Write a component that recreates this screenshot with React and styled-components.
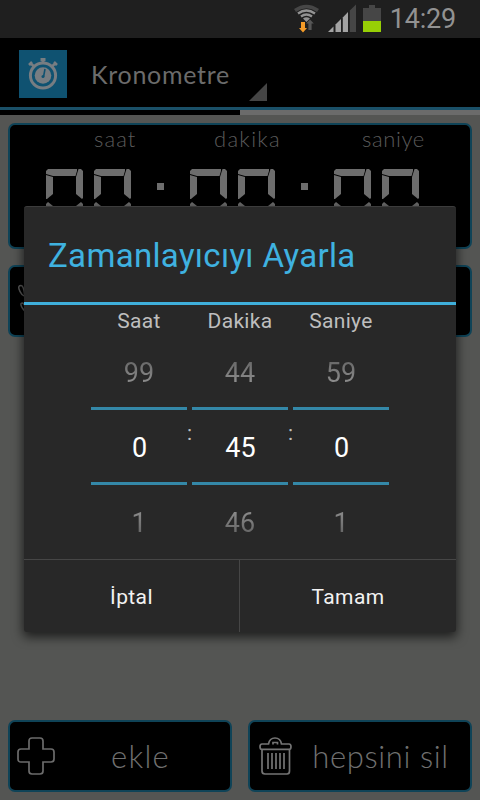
import React from 'react';
import styled, { createGlobalStyle } from 'styled-components';

const GlobalStyle = createGlobalStyle`
  * {
    box-sizing: border-box;
  }
  body {
    margin: 0;
    background-color: #545553;
    font-family: Roboto, 'Liberation Sans', sans-serif;
  }
`;

const Screen = styled.div`
  position: relative;
  display: flex;
  flex-direction: column;
  width: 480px;
  height: 800px;
  overflow: hidden;
  background-color: #545553;
`;

const StatusBar = styled.div`
  display: flex;
  align-items: center;
  justify-content: flex-end;
  height: 38px;
  padding-right: 24px;
  background-color: #1f1f1f;
`;

const Clock = styled.span`
  margin-left: 6px;
  padding-top: 1px;
  color: #929292;
  font-size: 27px;
  line-height: 37px;
  letter-spacing: -0.2px;
`;

const ActionBar = styled.div`
  display: flex;
  align-items: center;
  height: 72px;
  padding: 2px 0 0 19px;
  background-color: #000;
  border-bottom: 3px solid #1a5068;
`;

const AppTitle = styled.span`
  width: 158px;
  margin-left: 24px;
  color: #6b6b6b;
  font-family: Lato, 'Liberation Sans', sans-serif;
  font-size: 25px;
  line-height: 30px;
  letter-spacing: 0.7px;
  white-space: nowrap;
`;

const SpinnerMark = styled.i`
  align-self: flex-end;
  width: 18px;
  height: 18px;
  margin-bottom: 6px;
  background-color: #454545;
  clip-path: polygon(100% 0, 100% 100%, 0 100%);
`;

const TabStrip = styled.div`
  height: 5px;
  background: linear-gradient(to right, #000 50%, #6b6b6b 50%);
`;

const Content = styled.div`
  display: flex;
  flex: 1;
  flex-direction: column;
  gap: 16px;
  padding: 8px;
`;

const Panel = styled.div`
  background-color: #000;
  border: 2px solid #0f4357;
  border-radius: 7px;
`;

const TimerPanel = styled(Panel)`
  height: 126px;
  padding: 0 0 0 36px;
`;

const Captions = styled.div`
  display: flex;
  height: 44px;
`;

const Caption = styled.span`
  width: ${(props) => props.$width}px;
  padding-left: ${(props) => props.$indent}px;
  color: #5a5a5a;
  font-family: Lato, 'Liberation Sans', sans-serif;
  font-size: 22px;
  font-weight: 300;
  line-height: 27px;
  letter-spacing: ${(props) => props.$spacing}px;
`;

const Digits = styled.div`
  display: flex;
  gap: 11px;
`;

const DigitBox = styled.div`
  display: grid;
  width: 37px;
  height: 64px;
`;

const Segment = styled.i`
  grid-area: 1 / 1;
  background-color: #6d6d6d;
  clip-path: polygon(${(props) => props.$shape});
`;

const Dots = styled.div`
  display: flex;
  flex-direction: column;
  gap: 19px;
  width: 37px;
  padding: 14px 0 0 15px;
`;

const Dot = styled.i`
  width: 7px;
  height: 7px;
  background-color: #6d6d6d;
`;

const ButtonRow = styled.div`
  display: grid;
  grid-template-columns: 1fr 1fr;
  gap: 16px;
  margin-top: ${(props) => (props.$bottom ? 'auto' : 0)};
`;

const PanelButton = styled(Panel).attrs({ as: 'button' })`
  display: flex;
  align-items: center;
  height: 72px;
  padding: 0 0 0 7px;
  color: #707070;
  font-family: Lato, 'Liberation Sans', sans-serif;
  font-size: 31px;
  font-weight: 300;
  letter-spacing: ${(props) => props.$spacing || 0}px;

  & span {
    flex: 1;
    padding-right: ${(props) => props.$shift || 0}px;
    text-align: center;
    white-space: nowrap;
  }
`;

const Dialog = styled.div`
  position: absolute;
  top: 206px;
  left: 24px;
  display: flex;
  flex-direction: column;
  width: 432px;
  height: 426px;
  background-color: #282828;
  border-top: 1px solid #3c3c3c;
  border-radius: 3px;
  box-shadow: 0 4px 11px 1px rgba(0, 0, 0, 0.65);
`;

const DialogTitle = styled.h1`
  height: 98px;
  margin: 0;
  padding-left: 24px;
  color: #3fb2e0;
  border-bottom: 3px solid #3fafdb;
  font-size: 33px;
  font-weight: 400;
  line-height: 97px;
  letter-spacing: 0.33px;
  white-space: nowrap;
`;

const Pickers = styled.div`
  display: flex;
  height: 254px;
  padding-left: 67px;
`;

const PickerColumn = styled.div`
  width: 96px;
  text-align: center;
`;

const PickerLabel = styled.div`
  height: 30px;
  color: #bebebe;
  font-size: 21px;
  line-height: 32px;
  letter-spacing: 0.3px;
`;

const PickerSide = styled.div`
  height: 72px;
  color: transparent;
  background: linear-gradient(${(props) => props.$fade});
  background-clip: text;
  font-size: 27px;
  line-height: 77px;
`;

const PickerValue = styled.div`
  height: 78px;
  padding-left: 1px;
  color: #fff;
  border-top: 3px solid #3488a8;
  border-bottom: 3px solid #3488a8;
  font-size: 27px;
  line-height: 77px;
`;

const Colon = styled.span`
  width: 5px;
  padding-top: 114px;
  color: #bebebe;
  font-size: 21px;
  line-height: 28px;
`;

const DialogActions = styled.div`
  display: flex;
  flex: 1;
  border-top: 1px solid #464646;
`;

const DialogButton = styled.button`
  flex: 0 0 216px;
  padding: 2px 0 0;
  color: #f2f2f2;
  background: none;
  border: none;
  border-right: ${(props) => (props.$divided ? '1px solid #464646' : 'none')};
  font-family: inherit;
  font-size: 21px;
  letter-spacing: 0.4px;
`;

const SEGMENTS = {
  top: '0 2px, 2px 0, 31px 0, 31px 2px, 29.5px 7px, 7px 7px, 0 5px',
  topLeft: '0 6px, 7px 8px, 7px 25px, 1px 30px, 0 30px',
  topRight: '32.5px 0, 35px 0, 37px 2px, 37px 29px, 36px 30px, 30px 25px, 30px 8px',
  bottomLeft: '0 35px, 2px 33px, 7px 37px, 7px 54px, 0 58px',
  bottomRight: '37px 35px, 35px 33px, 30px 37px, 30px 54px, 37px 58px',
  bottom: '0 61px, 7px 57px, 30px 57px, 37px 61px, 35px 64px, 2px 64px',
};

const Zero = () => (
  <DigitBox>
    {Object.keys(SEGMENTS).map((name) => (
      <Segment key={name} $shape={SEGMENTS[name]} />
    ))}
  </DigitBox>
);

const Separator = () => (
  <Dots>
    <Dot />
    <Dot />
  </Dots>
);

const StatusIcons = () => (
  <svg width='91' height='38' viewBox='293 0 91 38'>
    <g fill='none'>
      <path d='M295 10.5Q306.500 2.500 318 10.500' stroke='#464646' strokeWidth='3.4' />
      <path d='M298 13.500Q306.300 7.500 315 13.500' stroke='#929292' strokeWidth='2.400' />
      <path d='M301 16.500Q306.300 12.500 312 16.500' stroke='#929292' strokeWidth='2.300' />
    </g>
    <path d='M303 18.500Q306.300 16 310 18.500L306.400 22z' fill='#929292' />
    <path d='M301 22h4v6h2l-4 4.500l-4-4.500h2z' fill='#f49b28' />
    <path d='M310 19.500l3.800 4h-2.200v6.500h-3.200v-6.500h-2.200z' fill='#565656' />
    <path d='M328 32L333.500 26.500V32z' fill='#a3a3a3' />
    <path d='M335.500 32V24.500L341 19V32z' fill='#a3a3a3' />
    <path d='M342.800 32V17.500L348 12V32z' fill='#a3a3a3' />
    <path d='M349.800 32V10.500L356 4.500V32z' fill='#464646' />
    <path d='M369 5h6v3h6v13h-18V8h6z' fill='#464646' />
    <rect x='363' y='21' width='18' height='11' fill='#97cf05' />
  </svg>
);

const StopwatchIcon = () => (
  <svg width='48' height='48' viewBox='0 0 48 48'>
    <rect width='48' height='48' fill='#0f5271' />
    <circle cx='24' cy='25.500' r='12.600' fill='none' stroke='#777d82' strokeWidth='3' />
    <circle cx='24' cy='25.500' r='8.300' fill='#777d82' />
    <path d='M21.500 8h5v3h-1v3h-3v-3h-1z' fill='#777d82' />
    <path d='M10 15l3-3M12 13.500l3 3M38 15l-3-3M36 13.500l-3 3' stroke='#777d82' strokeWidth='2.500' />
    <path d='M26 19L24.600 26.500' stroke='#0f5271' strokeWidth='1.600' />
    <circle cx='24' cy='26.500' r='1.500' fill='#0f5271' />
  </svg>
);

const PlusIcon = () => (
  <svg width='38' height='38' viewBox='0 0 38 38'>
    <path
      d='M15 1h8q3 0 3 3v8h8q3 0 3 3v7q0 3-3 3h-8v9q0 3-3 3h-8q-3 0-3-3v-9H4q-3 0-3-3v-7q0-3 3-3h8V4q0-3 3-3z'
      fill='none'
      stroke='#6b6b6b'
      strokeWidth='1.700'
    />
  </svg>
);

const TrashIcon = () => (
  <svg width='38' height='38' viewBox='0 0 38 38'>
    <g fill='none' stroke='#747474' strokeWidth='1.700'>
      <path d='M5 7h6.500Q12.500 1 18 1t6.500 6H32q2 0 2 2.700t-2 2.700H5q-2 0-2-2.700T5 7z' />
      <path d='M16 7.500V5.500h4.500v2' />
      <path d='M5 13v21q0 3 3 3h22q2.500 0 2.500-3V13' />
      <path d='M11 16v16M15 16v16M19 16v16M23 16v16M27 16v16' />
    </g>
  </svg>
);

const PhoneIcon = () => (
  <svg width='38' height='38' viewBox='0 0 38 38'>
    <g fill='none' stroke='#595959' strokeWidth='1.500'>
      <path d='M9 14.500Q4 13.500 2 7Q1 3.500 4 3.500Q6.500 3.500 7.500 12' />
      <path d='M10 31Q5 27 4 23Q3.500 21 5.500 21Q7 21.500 9 26' />
    </g>
  </svg>
);

const PICKERS = [
  { label: 'Saat', before: '99', value: '0', after: '1' },
  { label: 'Dakika', before: '44', value: '45', after: '46' },
  { label: 'Saniye', before: '59', value: '0', after: '1' },
];

const App = () => {
  return (
    <Screen>
      <GlobalStyle />
      <StatusBar>
        <StatusIcons />
        <Clock>14:29</Clock>
      </StatusBar>
      <ActionBar>
        <StopwatchIcon />
        <AppTitle>Kronometre</AppTitle>
        <SpinnerMark />
      </ActionBar>
      <TabStrip />

      <Content>
        <TimerPanel>
          <Captions>
            <Caption $width={120} $indent={48} $spacing={1.1}>
              saat
            </Caption>
            <Caption $width={148} $indent={48} $spacing={1.3}>
              dakika
            </Caption>
            <Caption $width={120} $indent={48} $spacing={0.6}>
              saniye
            </Caption>
          </Captions>
          <Digits>
            <Zero />
            <Zero />
            <Separator />
            <Zero />
            <Zero />
            <Separator />
            <Zero />
            <Zero />
          </Digits>
        </TimerPanel>

        <ButtonRow>
          <PanelButton>
            <PhoneIcon />
          </PanelButton>
          <PanelButton />
        </ButtonRow>

        <ButtonRow $bottom>
          <PanelButton $spacing={1.3} $shift={4}>
            <PlusIcon />
            <span>ekle</span>
          </PanelButton>
          <PanelButton $spacing={0.6} $shift={4}>
            <TrashIcon />
            <span>hepsini sil</span>
          </PanelButton>
        </ButtonRow>
      </Content>

      <Dialog>
        <DialogTitle>Zamanlayıcıyı Ayarla</DialogTitle>
        <Pickers>
          {PICKERS.map((picker, idx) => (
            <React.Fragment key={picker.label}>
              {idx > 0 && <Colon>:</Colon>}
              <PickerColumn>
                <PickerLabel>{picker.label}</PickerLabel>
                <PickerSide $fade='#606060 30%, #999 75%'>
                  {picker.before}
                </PickerSide>
                <PickerValue>{picker.value}</PickerValue>
                <PickerSide $fade='#999 25%, #5c5c5c 75%'>
                  {picker.after}
                </PickerSide>
              </PickerColumn>
            </React.Fragment>
          ))}
        </Pickers>
        <DialogActions>
          <DialogButton $divided>İptal</DialogButton>
          <DialogButton>Tamam</DialogButton>
        </DialogActions>
      </Dialog>
    </Screen>
  );
};

export default App;
